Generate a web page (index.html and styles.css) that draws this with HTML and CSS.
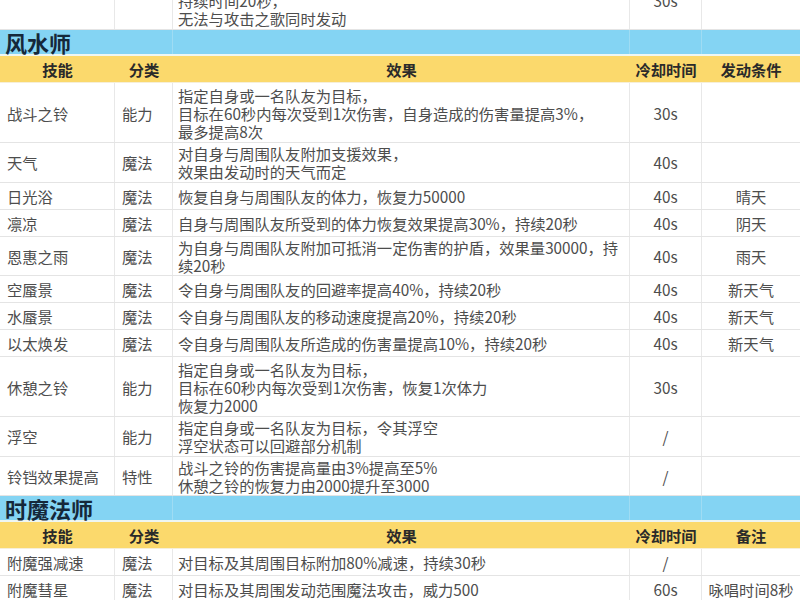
FILE: index.html
```html
<!DOCTYPE html>
<html lang="zh-CN">
<head>
<meta charset="utf-8">
<title>技能表</title>
<link rel="stylesheet" href="styles.css">
</head>
<body>
<div class="sheet">
  <div class="row h3">
    <div class="cell"></div>
    <div class="cell"></div>
    <div class="cell"><span>令自身与周围队友的攻击力提高，<br>持续时间20秒，<br>无法与攻击之歌同时发动</span></div>
    <div class="cell c"><span>30s</span></div>
    <div class="cell"></div>
  </div>

  <div class="row band">
    <div class="cell title">风水师</div>
    <div class="cell"></div>
    <div class="cell"></div>
    <div class="cell"></div>
    <div class="cell"></div>
  </div>
  <div class="row head">
    <div class="cell">技能</div>
    <div class="cell">分类</div>
    <div class="cell">效果</div>
    <div class="cell">冷却时间</div>
    <div class="cell">发动条件</div>
  </div>

  <div class="row h3">
    <div class="cell">战斗之铃</div>
    <div class="cell">能力</div>
    <div class="cell"><span>指定自身或一名队友为目标，<br>目标在60秒内每次受到1次伤害，自身造成的伤害量提高3%，<br>最多提高8次</span></div>
    <div class="cell c">30s</div>
    <div class="cell c"></div>
  </div>
  <div class="row h2">
    <div class="cell">天气</div>
    <div class="cell">魔法</div>
    <div class="cell"><span>对自身与周围队友附加支援效果，<br>效果由发动时的天气而定</span></div>
    <div class="cell c">40s</div>
    <div class="cell c"></div>
  </div>
  <div class="row h1">
    <div class="cell">日光浴</div>
    <div class="cell">魔法</div>
    <div class="cell">恢复自身与周围队友的体力，恢复力50000</div>
    <div class="cell c">40s</div>
    <div class="cell c">晴天</div>
  </div>
  <div class="row h1">
    <div class="cell">凛凉</div>
    <div class="cell">魔法</div>
    <div class="cell">自身与周围队友所受到的体力恢复效果提高30%，持续20秒</div>
    <div class="cell c">40s</div>
    <div class="cell c">阴天</div>
  </div>
  <div class="row h2">
    <div class="cell">恩惠之雨</div>
    <div class="cell">魔法</div>
    <div class="cell"><span>为自身与周围队友附加可抵消一定伤害的护盾，效果量30000，持<br>续20秒</span></div>
    <div class="cell c">40s</div>
    <div class="cell c">雨天</div>
  </div>
  <div class="row h1">
    <div class="cell">空蜃景</div>
    <div class="cell">魔法</div>
    <div class="cell">令自身与周围队友的回避率提高40%，持续20秒</div>
    <div class="cell c">40s</div>
    <div class="cell c">新天气</div>
  </div>
  <div class="row h1">
    <div class="cell">水蜃景</div>
    <div class="cell">魔法</div>
    <div class="cell">令自身与周围队友的移动速度提高20%，持续20秒</div>
    <div class="cell c">40s</div>
    <div class="cell c">新天气</div>
  </div>
  <div class="row h1">
    <div class="cell">以太焕发</div>
    <div class="cell">魔法</div>
    <div class="cell">令自身与周围队友所造成的伤害量提高10%，持续20秒</div>
    <div class="cell c">40s</div>
    <div class="cell c">新天气</div>
  </div>
  <div class="row h3">
    <div class="cell">休憩之铃</div>
    <div class="cell">能力</div>
    <div class="cell"><span>指定自身或一名队友为目标，<br>目标在60秒内每次受到1次伤害，恢复1次体力<br>恢复力2000</span></div>
    <div class="cell c">30s</div>
    <div class="cell c"></div>
  </div>
  <div class="row h2">
    <div class="cell">浮空</div>
    <div class="cell">能力</div>
    <div class="cell"><span>指定自身或一名队友为目标，令其浮空<br>浮空状态可以回避部分机制</span></div>
    <div class="cell c">/</div>
    <div class="cell c"></div>
  </div>
  <div class="row h2">
    <div class="cell">铃铛效果提高</div>
    <div class="cell">特性</div>
    <div class="cell"><span>战斗之铃的伤害提高量由3%提高至5%<br>休憩之铃的恢复力由2000提升至3000</span></div>
    <div class="cell c">/</div>
    <div class="cell c"></div>
  </div>

  <div class="row band">
    <div class="cell title">时魔法师</div>
    <div class="cell"></div>
    <div class="cell"></div>
    <div class="cell"></div>
    <div class="cell"></div>
  </div>
  <div class="row head">
    <div class="cell">技能</div>
    <div class="cell">分类</div>
    <div class="cell">效果</div>
    <div class="cell">冷却时间</div>
    <div class="cell">备注</div>
  </div>
  <div class="row h1">
    <div class="cell">附魔强减速</div>
    <div class="cell">魔法</div>
    <div class="cell">对目标及其周围目标附加80%减速，持续30秒</div>
    <div class="cell c">/</div>
    <div class="cell c"></div>
  </div>
  <div class="row h1">
    <div class="cell">附魔彗星</div>
    <div class="cell">魔法</div>
    <div class="cell">对目标及其周围发动范围魔法攻击，威力500</div>
    <div class="cell c">60s</div>
    <div class="cell c">咏唱时间8秒</div>
  </div>
</div>
</body>
</html>
```

FILE: styles.css
```css
html, body {
  margin: 0;
  padding: 0;
  background: #ffffff;
  overflow: hidden;
}

.sheet {
  width: 800px;
  margin-top: -30px;
  font-family: "Noto Sans CJK SC", "Noto Sans", sans-serif;
  font-size: 15.3px;
  line-height: 18px;
  color: #4d4d4d;
}

.row {
  display: grid;
  grid-template-columns: 115px 58px 457px 72px 98px;
  box-sizing: border-box;
  border-bottom: 1px solid #e4e4e4;
}

.h1 { height: 27px; }
.h2 { height: 39.5px; }
.h3 { height: 60px; }

.cell {
  display: flex;
  align-items: center;
  padding: 0 7px;
  white-space: nowrap;
  border-right: 1px solid #e8e8e8;
  overflow: hidden;
}

.cell:nth-child(3) {
  padding-left: 5px;
}

.cell:last-child {
  border-right: none;
}

.cell.c {
  justify-content: center;
  padding: 0;
}

.band {
  height: 26px;
  background: #84d4f3;
  border-bottom: 2px solid #eef6f2;
}

.band .cell {
  border-right-color: #9fdcf3;
}

.band .title {
  padding-left: 5px;
  font-size: 22px;
  font-weight: 700;
  color: #15283a;
  overflow: visible;
  border-right-color: transparent;
}

.head {
  height: 27px;
  background: #fbd96c;
  border-bottom: 1px solid #f6efd8;
}

.head .cell {
  justify-content: center;
  padding: 0;
  border-right: none;
  font-weight: 700;
  color: #2a2a2a;
}
```
